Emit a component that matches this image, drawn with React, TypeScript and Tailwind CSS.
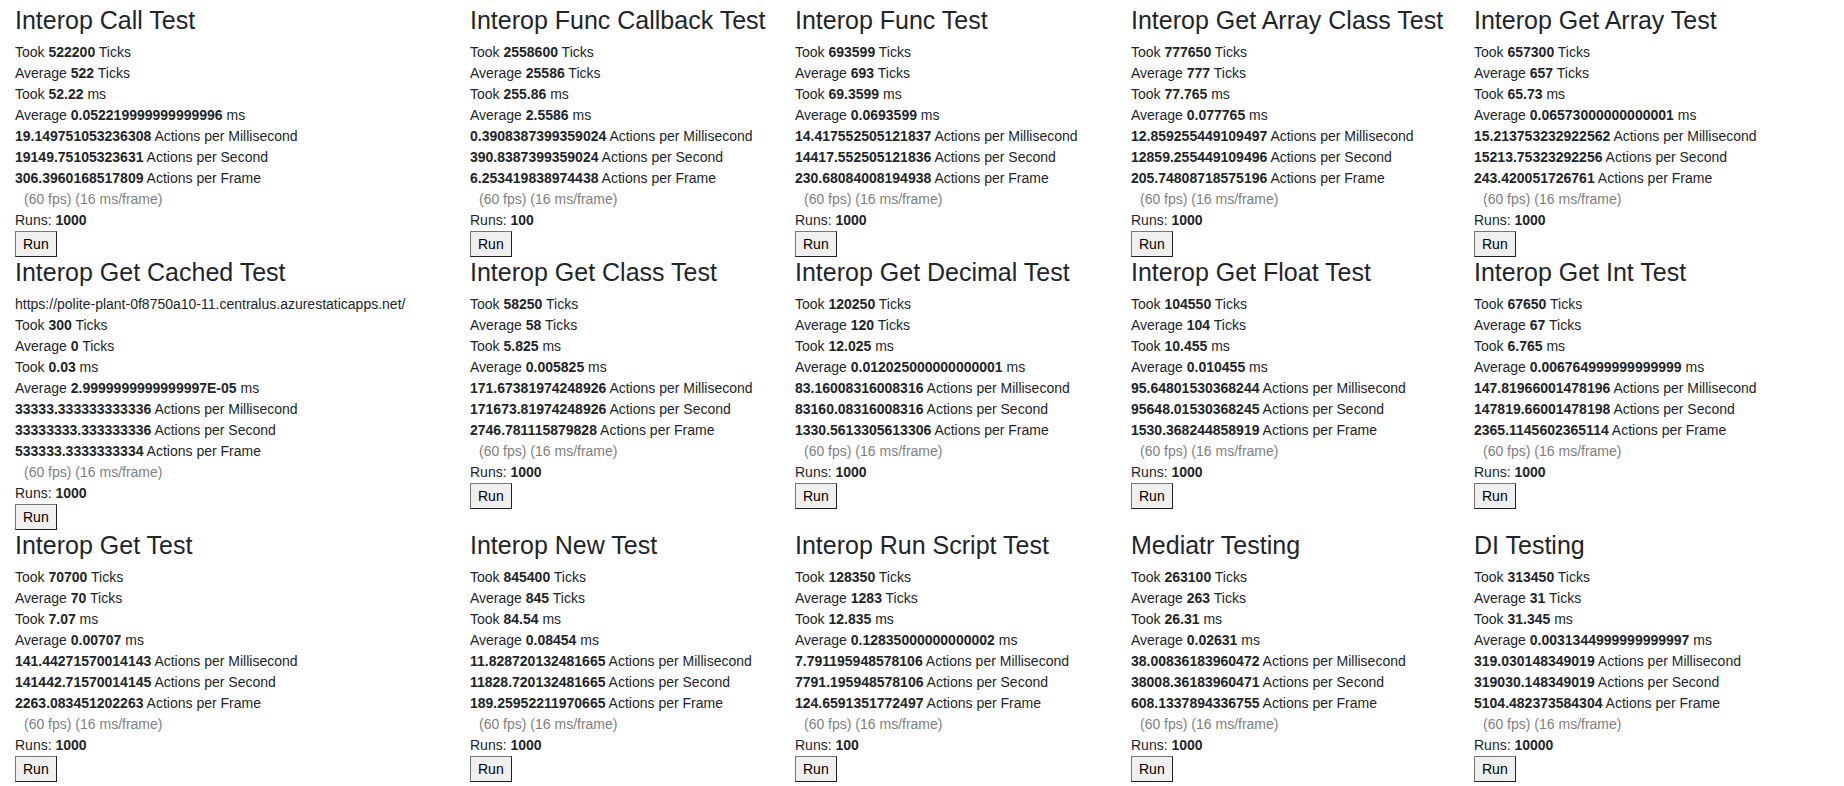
type Result = {
  title: string;
  note?: string;
  ticks: string;
  avgTicks: string;
  ms: string;
  avgMs: string;
  perMs: string;
  perSecond: string;
  perFrame: string;
  runs: string;
};

const results: Result[] = [
  { title: "Interop Call Test", ticks: "522200", avgTicks: "522", ms: "52.22", avgMs: "0.052219999999999996", perMs: "19.149751053236308", perSecond: "19149.75105323631", perFrame: "306.3960168517809", runs: "1000" },
  { title: "Interop Func Callback Test", ticks: "2558600", avgTicks: "25586", ms: "255.86", avgMs: "2.5586", perMs: "0.3908387399359024", perSecond: "390.8387399359024", perFrame: "6.253419838974438", runs: "100" },
  { title: "Interop Func Test", ticks: "693599", avgTicks: "693", ms: "69.3599", avgMs: "0.0693599", perMs: "14.417552505121837", perSecond: "14417.552505121836", perFrame: "230.68084008194938", runs: "1000" },
  { title: "Interop Get Array Class Test", ticks: "777650", avgTicks: "777", ms: "77.765", avgMs: "0.077765", perMs: "12.859255449109497", perSecond: "12859.255449109496", perFrame: "205.74808718575196", runs: "1000" },
  { title: "Interop Get Array Test", ticks: "657300", avgTicks: "657", ms: "65.73", avgMs: "0.06573000000000001", perMs: "15.213753232922562", perSecond: "15213.75323292256", perFrame: "243.420051726761", runs: "1000" },
  { title: "Interop Get Cached Test", note: "https://polite-plant-0f8750a10-11.centralus.azurestaticapps.net/", ticks: "300", avgTicks: "0", ms: "0.03", avgMs: "2.9999999999999997E-05", perMs: "33333.333333333336", perSecond: "33333333.333333336", perFrame: "533333.3333333334", runs: "1000" },
  { title: "Interop Get Class Test", ticks: "58250", avgTicks: "58", ms: "5.825", avgMs: "0.005825", perMs: "171.67381974248926", perSecond: "171673.81974248926", perFrame: "2746.781115879828", runs: "1000" },
  { title: "Interop Get Decimal Test", ticks: "120250", avgTicks: "120", ms: "12.025", avgMs: "0.012025000000000001", perMs: "83.16008316008316", perSecond: "83160.08316008316", perFrame: "1330.5613305613306", runs: "1000" },
  { title: "Interop Get Float Test", ticks: "104550", avgTicks: "104", ms: "10.455", avgMs: "0.010455", perMs: "95.64801530368244", perSecond: "95648.01530368245", perFrame: "1530.368244858919", runs: "1000" },
  { title: "Interop Get Int Test", ticks: "67650", avgTicks: "67", ms: "6.765", avgMs: "0.006764999999999999", perMs: "147.81966001478196", perSecond: "147819.66001478198", perFrame: "2365.1145602365114", runs: "1000" },
  { title: "Interop Get Test", ticks: "70700", avgTicks: "70", ms: "7.07", avgMs: "0.00707", perMs: "141.44271570014143", perSecond: "141442.71570014145", perFrame: "2263.083451202263", runs: "1000" },
  { title: "Interop New Test", ticks: "845400", avgTicks: "845", ms: "84.54", avgMs: "0.08454", perMs: "11.828720132481665", perSecond: "11828.720132481665", perFrame: "189.25952211970665", runs: "1000" },
  { title: "Interop Run Script Test", ticks: "128350", avgTicks: "1283", ms: "12.835", avgMs: "0.12835000000000002", perMs: "7.791195948578106", perSecond: "7791.195948578106", perFrame: "124.6591351772497", runs: "100" },
  { title: "Mediatr Testing", ticks: "263100", avgTicks: "263", ms: "26.31", avgMs: "0.02631", perMs: "38.00836183960472", perSecond: "38008.36183960471", perFrame: "608.1337894336755", runs: "1000" },
  { title: "DI Testing", ticks: "313450", avgTicks: "31", ms: "31.345", avgMs: "0.0031344999999999997", perMs: "319.030148349019", perSecond: "319030.148349019", perFrame: "5104.482373584304", runs: "10000" },
];

function TestCard({ result }: { result: Result }) {
  return (
    <section>
      <h3 className="mb-[7px] text-[25px] leading-[30px] whitespace-nowrap">{result.title}</h3>
      {result.note && <div>{result.note}</div>}
      <div>Took <b>{result.ticks}</b> Ticks</div>
      <div>Average <b>{result.avgTicks}</b> Ticks</div>
      <div>Took <b>{result.ms}</b> ms</div>
      <div>Average <b>{result.avgMs}</b> ms</div>
      <div><b>{result.perMs}</b> Actions per Millisecond</div>
      <div><b>{result.perSecond}</b> Actions per Second</div>
      <div><b>{result.perFrame}</b> Actions per Frame</div>
      <div className="pl-[9px] text-[#808080]">(60 fps) (16 ms/frame)</div>
      <div>Runs: <b>{result.runs}</b></div>
      <button
        type="button"
        aria-label={`Run ${result.title}`}
        className="block border border-t-[#767676] border-r-[#212121] border-b-[#212121] border-l-[#767676] bg-[#efefef] px-[7px] py-px leading-[22px] text-black"
      >
        Run
      </button>
    </section>
  );
}

export default function App() {
  return (
    <main className="grid grid-cols-[455fr_325fr_336fr_343fr_370fr] bg-white pt-[5px] pl-[15px] font-['Liberation_Sans',Arial,sans-serif] text-[14px] leading-[21px] text-[#212529]">
      {results.map((result) => (
        <TestCard key={result.title} result={result} />
      ))}
    </main>
  );
}
